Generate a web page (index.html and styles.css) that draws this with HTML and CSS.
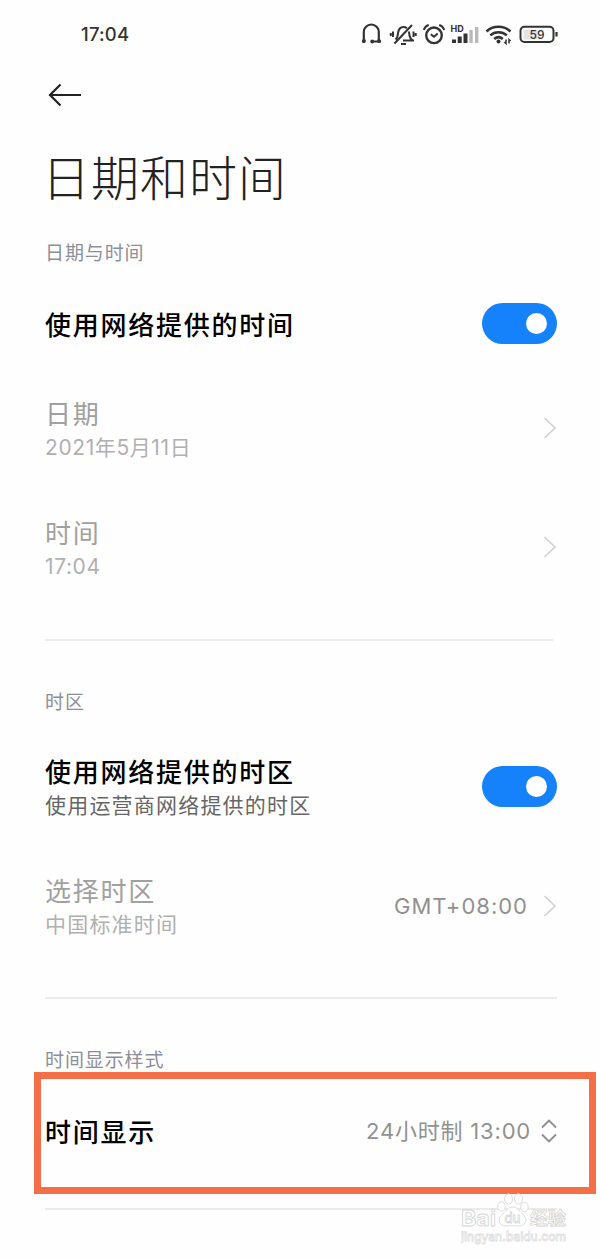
FILE: index.html
```html
<!DOCTYPE html>
<html lang="zh-CN">
<head>
  <meta charset="UTF-8" />
  <meta name="viewport" content="width=device-width, initial-scale=1" />
  <title>日期和时间</title>
  <link rel="stylesheet" href="styles.css">
</head>
<body>

  <div class="statusbar">
    <span class="clock">17:04</span>
    <svg class="status-icons" viewBox="0 0 202 26" fill="none" stroke="#333" stroke-width="2">
      <!-- headset -->
      <path d="M3.800 20V11a7.500 7.500 0 0 1 15 0V20M2 20.500h3M12 20.500h9" stroke-width="2.200"/>
      <circle cx="4" cy="20" r="1.900" fill="#333" stroke="none"/>
      <circle cx="12.200" cy="20.500" r="1.900" fill="#333" stroke="none"/>
      <circle cx="19" cy="20" r="1.900" fill="#333" stroke="none"/>
      <!-- muted bell -->
      <path d="M43 19.500h11M35.500 18.500c2.600-1.800 2.200-4 2.600-7 .6-3.500 2.600-5.500 5.400-5.500 1.400 0 2.500.4 3.400 1.200M49 10.500c.4 4 .2 6.500 3.600 9M41 23h5M34.500 22.500L52 4M33 10.500v5.500M30.800 12v3M53.500 10.500v5.500M55.700 12v3"/>
      <!-- alarm -->
      <circle cx="74" cy="14.300" r="7.800" stroke-width="2.400"/>
      <path d="M70.800 13.200l3.200 2.500 3.700-3.200M63.800 9c.8-2.600 2.600-4.300 5-5M84.200 9c-.8-2.600-2.600-4.300-5-5"/>
      <!-- signal -->
      <g stroke="none" fill="#333">
        <rect x="92" y="18.500" width="4" height="3.500"/>
        <rect x="97.700" y="15.500" width="4" height="6.500"/>
        <rect x="103.500" y="12.500" width="4" height="9.500"/>
        <rect x="109.300" y="9" width="3.400" height="13" fill="#b9b9b9"/>
        <rect x="115" y="6" width="3.400" height="16" fill="#b9b9b9"/>
        <text class="hd" x="90.500" y="11">HD</text>
      </g>
      <!-- wifi -->
      <path d="M126.500 10.500c6.500-6.200 17.500-6.200 24 0M130.300 14.300c4.500-4.200 12-4.200 16.500 0M134.200 18c2.600-2.300 6-2.300 8.600 0" stroke-width="2.500"/>
      <circle cx="138.500" cy="20.500" r="2" fill="#333" stroke="none"/>
      <path d="M146 18.500v4l-1.700-1.500M149 22.500v-4l1.600 1.500" stroke-width="1.500"/>
      <!-- battery -->
      <rect x="160.500" y="5.800" width="33" height="15.200" rx="4"/>
      <rect x="163.500" y="8.500" width="14" height="10" fill="#e4e4e4" stroke="none"/>
      <path d="M196.500 11v4.500" stroke-width="2.200"/>
      <text class="battery" x="177" y="18" text-anchor="middle">59</text>
    </svg>
  </div>

  <header>
    <svg class="back" viewBox="0 0 34 24" fill="none" stroke="#222" stroke-width="2.200">
      <path d="M33 12H2M12.500 1.500L2 12l10.500 10.500"/>
    </svg>
    <h1>日期和时间</h1>
  </header>

  <section class="datetime">
    <h2>日期与时间</h2>
    <div class="row single">
      <div class="name">使用网络提供的时间</div>
      <div class="switch"></div>
    </div>
    <div class="row disabled">
      <div>
        <div class="name">日期</div>
        <div class="desc date">2021年5月11日</div>
      </div>
      <svg class="arrow" viewBox="0 0 14 22"><path d="M1.500 1l10.500 10L1.500 21"/></svg>
    </div>
    <div class="row disabled">
      <div>
        <div class="name">时间</div>
        <div class="desc date">17:04</div>
      </div>
      <svg class="arrow" viewBox="0 0 14 22"><path d="M1.500 1l10.500 10L1.500 21"/></svg>
    </div>
  </section>

  <section class="zone">
    <h2>时区</h2>
    <div class="row">
      <div>
        <div class="name">使用网络提供的时区</div>
        <div class="desc">使用运营商网络提供的时区</div>
      </div>
      <div class="switch"></div>
    </div>
    <div class="row disabled">
      <div>
        <div class="name">选择时区</div>
        <div class="desc">中国标准时间</div>
      </div>
      <div class="value">GMT+08:00</div>
      <svg class="arrow" viewBox="0 0 14 22"><path d="M1.500 1l10.500 10L1.500 21"/></svg>
    </div>
  </section>

  <section>
    <h2>时间显示样式</h2>
    <div class="row single marked">
      <div class="name">时间显示</div>
      <div class="value format">24小时制 13:00</div>
      <svg class="updown" viewBox="0 0 16 24"><path d="M1 8.500l7-7 7 7M1 15.500l7 7 7-7"/></svg>
    </div>
  </section>

  <svg class="watermark" viewBox="0 0 120 62">
    <g class="outline">
      <text x="0" y="35.500" font-size="21" textLength="35" lengthAdjust="spacingAndGlyphs">Bai</text>
      <path d="M51.500 17c5 0 6 3.500 9.500 6.500 6.500 5 4.500 12.500-3 12.500-4-.5-9-.5-13 0-7 0-9.500-7.500-3-12.500 4-3 4.500-6.500 9.500-6.500z"/>
      <ellipse cx="40.500" cy="16.500" rx="3.800" ry="4.800"/>
      <ellipse cx="47.500" cy="9" rx="4" ry="5.200"/>
      <ellipse cx="57.500" cy="9" rx="4" ry="5.200"/>
      <ellipse cx="63.500" cy="17" rx="3.800" ry="4.800"/>
      <text class="du" x="43.500" y="33" font-size="14" textLength="16" lengthAdjust="spacingAndGlyphs">du</text>
      <text x="69" y="34.500" font-size="18">经验</text>
      <text class="site" x="0" y="51" font-size="12.500" textLength="105" lengthAdjust="spacingAndGlyphs">jingyan.baidu.com</text>
    </g>
  </svg>

</body>
</html>
```

FILE: styles.css
```css
* {
  box-sizing: border-box;
}
body {
  position: relative;
  margin: 0;
  width: 601px;
  height: 1258px;
  overflow: hidden;
  background: #fefefe;
  color: #000;
  font-family: Inter, "Noto Sans CJK SC", sans-serif;
}
.statusbar {
  display: flex;
  align-items: center;
  justify-content: space-between;
  height: 68px;
  padding: 0 39px 0 81px;
}
.clock {
  font-size: 18.5px;
  font-weight: 500;
  letter-spacing: 0.2px;
  color: #333;
}
.status-icons {
  width: 202px;
  height: 26px;
}
.hd {
  font-size: 9px;
  font-weight: 700;
}
.battery {
  font-size: 12px;
  font-weight: 500;
  fill: #333;
  stroke: none;
}
header {
  height: 162px;
  padding: 15px 45px 0 48px;
}
.back {
  display: block;
  width: 34px;
  height: 24px;
}
h1 {
  margin: 32px 0 0 -6px;
  font-family: "Noto Sans CJK SC", sans-serif;
  font-size: 48px;
  font-weight: 300;
  line-height: 72px;
  letter-spacing: 1px;
  color: #222;
}
section {
  margin: 0 44px 38px 45px;
}
section::after {
  content: '';
  display: block;
  height: 2px;
  margin-top: 31px;
  background: #ebebeb;
}
h2 {
  margin: 0;
  font-size: 19px;
  font-weight: 400;
  line-height: 47px;
  letter-spacing: 0.9px;
  color: #8c8f99;
}
.row {
  display: flex;
  align-items: center;
  height: 119px;
}
.row > :first-child {
  margin-right: auto;
}
.single {
  height: 93px;
}
.name {
  font-size: 26px;
  font-weight: 500;
  line-height: 35px;
  letter-spacing: 1.75px;
}
.single .name {
  padding-top: 3px;
}
.desc {
  font-size: 21px;
  line-height: 32px;
  letter-spacing: 1.2px;
  color: #666;
}
.date {
  letter-spacing: 0.6px;
}
.disabled .name {
  font-weight: 400;
  color: #a0a0a0;
}
.disabled .desc {
  color: #b0b0b0;
}
.value {
  font-size: 22px;
  letter-spacing: 1px;
  color: #919191;
}
.format {
  padding-bottom: 3px;
  letter-spacing: 0.8px;
}
.switch {
  width: 75px;
  height: 41px;
  padding: 10px 10px 10px 44px;
  border-radius: 21px;
  background: #1581fa;
}
.switch::before {
  content: '';
  display: block;
  width: 21px;
  height: 21px;
  border-radius: 50%;
  background: #fff;
}
.arrow {
  width: 14px;
  height: 22px;
  margin-left: 15px;
  fill: none;
  stroke: #d0d0d0;
  stroke-width: 1.6;
}
.datetime .disabled > :first-child {
  padding-top: 2px;
}
.datetime .arrow {
  margin-bottom: 4px;
}
.datetime::after {
  margin-right: 4px;
}
.zone h2 {
  margin-bottom: 1px;
}
.zone .row > :first-child {
  padding-top: 3px;
}
.zone::after {
  margin-top: 32px;
}
.updown {
  width: 16px;
  height: 24px;
  margin-left: 10px;
  fill: none;
  stroke: #8e8e8e;
  stroke-width: 1.9;
}
.marked {
  position: relative;
}
/* orange frame around the highlighted setting */
.marked::before {
  content: '';
  position: absolute;
  inset: -12px -39px -17px -11px;
  border: 7px solid #f46f47;
}
.watermark {
  position: absolute;
  left: 461px;
  top: 1190px;
  width: 120px;
  height: 62px;
}
.outline {
  fill: #fefefe;
  stroke: #d6d6d6;
  stroke-width: 0.8;
  font-weight: 700;
}
.du {
  font-weight: 500;
}
.site {
  font-weight: 500;
  stroke: #dedede;
}
```
